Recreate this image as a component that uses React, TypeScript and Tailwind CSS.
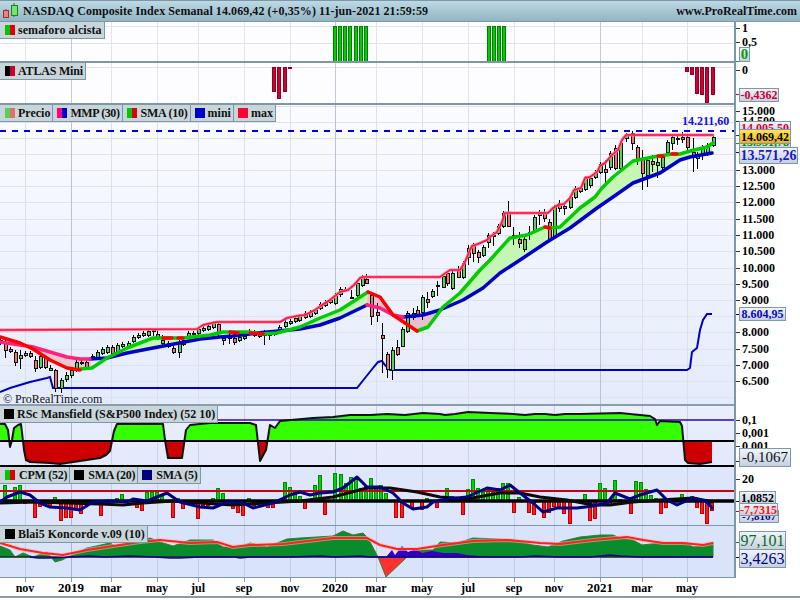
import type { ReactNode } from "react";

const SERIF = "font-['Liberation_Serif',_'Times_New_Roman',_serif]";

// x positions of the time grid
const MONTH_X = [25, 111, 157, 198, 244, 290, 376, 422, 468, 514, 554, 642, 687];
const YEAR_X = [71, 335, 600];

// price levels drawn across the main panel
const PRICE_Y = [106, 122, 138, 154, 170, 186, 202, 219, 235, 251, 268, 284, 300, 316, 332, 349, 365, 381, 397];

const PRICE_LABELS: [string, number][] = [
  ["15.000", 111],
  ["14.500", 121],
  ["13.000", 170],
  ["12.500", 186],
  ["12.000", 202],
  ["11.500", 219],
  ["11.000", 235],
  ["10.500", 251],
  ["10.000", 268],
  ["9.500", 284],
  ["9.000", 300],
  ["8.000", 332],
  ["7.500", 349],
  ["7.000", 365],
  ["6.500", 381],
];

const TIME_LABELS: [string, number, boolean][] = [
  ["nov", 25, false],
  ["2019", 71, true],
  ["mar", 111, false],
  ["may", 157, false],
  ["jul", 198, false],
  ["sep", 244, false],
  ["nov", 290, false],
  ["2020", 335, true],
  ["mar", 376, false],
  ["may", 422, false],
  ["jul", 468, false],
  ["sep", 514, false],
  ["nov", 554, false],
  ["2021", 600, true],
  ["mar", 642, false],
  ["may", 687, false],
];

// x, body top, body bottom, green?, wick top, wick bottom (all page pixels)
type Candle = [number, number, number, number, number?, number?];
const CANDLES: Candle[] = [
  [0, 340, 343, 1], [5, 343, 350, 0, 340, 358], [10, 349, 351, 0], [15, 352, 362, 0, 350, 366], [20, 355, 358, 1, 350, 369],
  [25, 353, 355, 1], [30, 353, 356, 0], [35, 360, 368, 0, 356, 372], [40, 356, 367, 1], [45, 357, 367, 0],
  [50, 368, 370, 1, 365, 371], [55, 370, 388, 0, 369, 392], [61, 380, 388, 1, 378, 393], [66, 375, 379, 1, 372, 382], [71, 370, 375, 1, 367, 378],
  [76, 362, 370, 1], [81, 362, 363, 1], [86, 362, 367, 0], [92, 356, 358, 1], [97, 352, 357, 1],
  [102, 349, 353, 1], [107, 347, 352, 1], [112, 347, 353, 0, 345, 358], [117, 345, 352, 1], [122, 344, 346, 1],
  [128, 343, 347, 1], [133, 337, 341, 1], [138, 335, 337, 1], [143, 333, 335, 1], [148, 331, 335, 1],
  [153, 330, 331, 1, 328, 336], [157, 334, 338, 0, 330, 340], [162, 340, 343, 1, 335, 347], [168, 343, 346, 0], [173, 348, 352, 0],
  [179, 342, 352, 1, 340, 358], [183, 340, 344, 1], [188, 333, 337, 1], [193, 333, 334, 1], [198, 329, 333, 1],
  [203, 328, 330, 1], [208, 326, 329, 1], [213, 323, 327, 1], [218, 324, 333, 0, 321, 336], [223, 338, 340, 1, 335, 345],
  [229, 336, 338, 1, 333, 344], [234, 338, 342, 0, 334, 345], [239, 337, 340, 1], [244, 336, 338, 1], [249, 331, 333, 1],
  [254, 332, 335, 0], [259, 334, 336, 1], [264, 334, 335, 1, 330, 345], [269, 333, 335, 1, 331, 340], [274, 332, 334, 1],
  [279, 327, 330, 1], [285, 322, 326, 1], [290, 321, 323, 1], [295, 318, 321, 1], [299, 316, 320, 1],
  [305, 313, 317, 1], [310, 312, 316, 1], [315, 310, 313, 1], [320, 304, 308, 1], [325, 302, 305, 1],
  [330, 300, 302, 1], [335, 295, 303, 1], [340, 289, 294, 1, 287, 297], [345, 289, 290, 1], [351, 297, 298, 1, 290, 299],
  [357, 283, 295, 1], [362, 277, 285, 1], [366, 279, 283, 0, 274, 284], [371, 295, 316, 0, 293, 325], [377, 312, 315, 0, 303, 322],
  [382, 335, 338, 0, 323, 373], [387, 354, 369, 0, 352, 378], [392, 350, 370, 1, 347, 380], [397, 347, 354, 0, 340, 356], [402, 329, 346, 1, 327, 347],
  [407, 313, 331, 1, 311, 333], [413, 313, 317, 1, 308, 320], [417, 310, 314, 0, 306, 317], [422, 297, 312, 1, 295, 320], [427, 299, 302, 0, 292, 308],
  [432, 291, 296, 1, 289, 298], [437, 285, 286, 1, 281, 296], [443, 276, 287, 1, 274, 288], [447, 273, 283, 0, 270, 286], [452, 273, 288, 1],
  [458, 270, 277, 0, 266, 278], [463, 263, 277, 1], [468, 248, 257, 1, 245, 265], [473, 246, 253, 0, 243, 262], [478, 252, 257, 0, 250, 263],
  [483, 247, 255, 1], [488, 235, 242, 1, 233, 248], [493, 235, 236, 1, 232, 246], [498, 226, 233, 1, 224, 235], [503, 213, 226, 1],
  [508, 213, 226, 0, 201, 227], [513, 235, 238, 1, 227, 245], [519, 239, 243, 0, 232, 248], [524, 239, 249, 1, 236, 252], [529, 232, 234, 1, 226, 240],
  [534, 217, 231, 1, 215, 233], [539, 213, 215, 1, 210, 225], [544, 213, 218, 0, 209, 222], [549, 222, 239, 0, 219, 241], [554, 207, 236, 1],
  [559, 203, 208, 0, 200, 212], [564, 206, 208, 1, 203, 215], [570, 197, 207, 1], [575, 188, 197, 1], [580, 188, 191, 1],
  [585, 178, 189, 1], [590, 178, 185, 1, 176, 188], [595, 172, 177, 1], [600, 164, 172, 1], [605, 169, 172, 0, 160, 187],
  [610, 153, 167, 1, 151, 170], [615, 148, 168, 0, 145, 170], [620, 143, 168, 1], [626, 135, 138, 1, 133, 142], [632, 133, 143, 0, 131, 150],
  [637, 147, 159, 0, 145, 165], [642, 159, 173, 0, 150, 190], [647, 160, 175, 1, 158, 187], [652, 161, 164, 0, 155, 172], [657, 162, 165, 1, 158, 178],
  [662, 157, 167, 1, 155, 172], [667, 142, 152, 1, 140, 155], [672, 137, 143, 1, 135, 150], [677, 138, 139, 1, 136, 145], [682, 137, 139, 0, 132, 143],
  [687, 137, 147, 0, 135, 150], [693, 152, 157, 0, 138, 172], [697, 155, 158, 1, 152, 169], [702, 147, 153, 1, 145, 160], [707, 145, 152, 1, 143, 156],
  [713, 137, 145, 1, 136, 147],
];

const MAX_LINE =
  "0,330 197,329 203,325 217,322 280,322 287,318 297,316 305,315 315,310 322,305 330,300 340,292 348,290 354,285 360,278 363,277 440,277 447,272 450,270 460,270 465,262 470,250 472,246 478,244 487,240 491,236 497,232 502,222 505,213 548,213 553,208 558,205 564,204 570,198 574,190 581,188 585,178 590,177 597,172 600,166 605,163 612,155 618,150 622,140 626,135 713,135";

const MMP_BLUE_A =
  "90,359 107,358 127,353 153,348 200,339 220,337 233,336 257,333 300,329 320,325 340,318 367,305";
const MMP_BLUE_B =
  "403,317 423,315 440,310 463,300 483,288 500,273 520,260 547,242 570,228 597,208 613,197 633,183 660,173 680,160 690,157 712,153";
const MMP_PINK_A = "0,342 33,347 50,352 67,357 80,359 90,359";
const MMP_PINK_B = "367,305 380,308 393,315 403,317";

const SMA_RED_A = "0,337 20,343 33,349 50,360 67,368 80,370";
const SMA_RED_B = "368,292 380,297 393,315 417,331";
const SMA_GREEN_A =
  "80,369 92,368 107,358 127,348 153,338 183,338 210,335 223,332 247,332 263,334 277,333 300,327 320,318 340,310 368,292";
const SMA_GREEN_B =
  "417,331 428,327 443,307 460,293 480,270 490,260 510,238 527,235 545,227 550,228 560,227 580,208 595,197 602,188 613,177 633,161 653,157 672,154 680,154 690,151 707,147 713,143";

const FILL_PINK_A = "15,344 33,349 50,360 67,368 80,370 92,368 90,359 80,359 67,357 50,352 33,347";
const FILL_GREEN_A =
  "107,358 127,348 153,338 183,338 210,335 223,332 247,332 263,334 277,333 300,327 320,318 340,310 368,292 367,305 340,318 320,325 300,329 257,333 233,336 220,337 200,339 153,348 127,353";
const FILL_PINK_B = "368,292 380,297 393,315 417,331 428,327 437,314 423,315 403,317 393,315 380,308 367,305";
const FILL_GREEN_B =
  "437,314 443,307 460,293 480,270 490,260 510,238 527,235 545,227 550,228 560,227 580,208 595,197 602,188 613,177 633,161 653,157 672,154 680,154 690,151 707,147 713,143 712,153 690,157 680,160 660,173 633,183 613,197 597,208 570,228 547,242 520,260 500,273 483,288 463,300 440,310";

const MINI_LINE =
  "0,392 10,388 20,385 30,382 47,378 50,377 53,388 357,388 365,378 373,368 378,362 382,361 385,365 390,370 687,370 690,368 692,352 697,348 700,330 703,320 707,314 712,314";

const RSC_CURVE =
  "0,424 5,424 8,430 10,447 12,440 14,428 18,425 21,424 24,450 26,460 30,462 50,463 60,464 80,461 100,458 106,455 110,451 114,431 117,424 160,424 163,424 165,440 168,458 182,458 186,430 190,425 210,423 250,423 256,425 260,461 266,450 270,425 275,428 280,421 313,418 333,417 350,415 370,415 387,414 405,415 423,413 440,414 445,415 455,414 468,412 490,413 513,414 525,415 535,414 545,414 555,415 565,414 580,414 620,413 650,416 655,419 657,425 660,421 680,422 682,426 685,460 688,463 700,464 712,462";

// CPM histogram: x and the far end of the bar (zero is at y=501)
const CPM_BARS: [number, number][] = [
  [5, 485], [15, 487], [20, 485], [25, 503], [35, 517], [40, 506], [45, 505], [50, 506], [55, 497], [61, 520], [66, 517], [71, 517], [76, 508], [81, 513],
  [101, 515], [117, 498], [122, 494], [127, 500], [137, 507], [142, 510], [147, 492], [152, 492], [157, 492], [162, 496], [173, 517], [178, 498], [183, 508], [193, 504], [198, 518], [203, 505], [208, 505], [213, 498], [218, 488], [223, 493], [233, 508], [238, 512], [243, 515], [249, 498], [254, 505], [268, 507], [273, 507], [285, 482], [290, 487], [295, 492], [300, 496],
  [305, 508], [315, 485], [320, 475], [325, 514], [335, 473], [341, 474], [346, 483], [351, 477], [356, 478], [361, 488], [366, 486], [371, 478], [376, 488], [381, 485], [386, 493], [396, 517], [402, 517], [412, 507], [422, 509], [427, 498], [437, 507], [447, 488], [452, 496], [463, 514], [468, 489], [473, 479], [478, 488], [483, 492], [488, 487], [493, 492], [498, 488], [503, 483], [508, 483], [514, 512], [519, 497], [529, 512], [534, 514], [544, 517], [549, 512], [554, 506], [559, 506], [564, 513], [570, 523],
  [585, 494], [590, 520], [595, 518], [600, 483], [605, 488], [610, 505], [615, 480], [620, 499], [631, 513], [636, 481], [641, 482], [646, 489], [651, 495], [656, 498], [661, 513], [666, 507], [682, 494], [692, 496], [697, 507], [702, 513], [707, 523], [712, 510],
];

const CPM_NAVY =
  "0,502 7,497 20,492 30,495 40,503 50,507 67,508 80,510 93,502 110,501 127,502 133,499 147,501 167,493 180,502 200,507 213,508 227,502 243,503 253,508 273,503 290,495 300,492 310,495 320,493 333,492 343,488 357,477 367,487 380,487 393,493 403,503 413,509 427,507 433,502 447,499 467,497 487,488 500,490 510,485 520,493 533,503 543,512 557,508 577,508 593,506 607,503 615,493 630,499 640,495 657,490 667,500 677,505 693,498 707,502 713,509";
const CPM_BLACK =
  "0,503 33,502 67,503 100,504 123,505 143,503 173,501 200,503 233,505 267,503 300,501 333,497 367,488 390,488 417,492 440,497 467,499 500,493 520,493 540,497 567,500 593,505 610,505 633,502 660,500 693,498 713,502";

const KON_GREEN =
  "0,557 0,546 10,550 15,557 23,553 33,557 47,552 55,562 62,560 72,555 87,548 110,543 115,546 133,543 150,538 160,542 173,546 190,540 213,540 223,547 240,547 250,543 267,547 287,539 300,538 317,537 333,536 343,531 353,535 363,533 368,538 378,557";
const KON_GREEN_B =
  "407,557 415,550 433,550 440,542 457,543 473,538 497,539 513,540 533,545 548,547 563,541 580,537 600,535 613,535 620,538 633,540 642,545 660,543 688,543 693,547 707,545 713,542 713,557";
const KON_BLUE =
  "386,557 392,550 395,555 402,546 408,552 415,549 422,553 432,551 443,553 457,553 467,555 480,556 500,557";
const KON_RED_AREA = "378,557 386,577 407,557";
const KON_RED_LINE =
  "0,543 20,549 43,553 63,555 87,550 113,546 140,542 160,540 190,543 217,542 233,547 250,545 283,544 300,542 333,538 367,538 380,545 397,549 417,549 443,545 473,541 507,540 540,543 560,544 593,540 627,537 643,540 663,543 683,543 703,545 713,543";
const KON_NAVY =
  "30,557 38,558 48,558 70,557 90,556 105,557 130,556 155,557 170,558 180,558 200,557 235,557 240,558 250,557 290,557 320,556 335,557 360,556 370,557 500,557 520,557 535,556 560,557 590,557 610,555 620,556 640,557 660,557 713,557";

function Swatch({ left, right }: { left: string; right?: string }) {
  return (
    <span className="flex w-[10px] h-[10px] shrink-0">
      <span className={`flex-1 ${left}`} />
      <span className={`flex-1 ${right ?? left}`} />
    </span>
  );
}

function Tab({ children, className = "" }: { children: ReactNode; className?: string }) {
  return (
    <div
      className={`flex items-center gap-[3px] h-[17px] pl-[4px] pr-[2px] bg-[#c8d6dc] border-r border-b border-[#7f97a4] text-[12px] font-bold text-[#111] whitespace-nowrap ${className}`}
    >
      {children}
    </div>
  );
}

function TabRow({ children }: { children: ReactNode }) {
  return <div className="absolute left-0 top-0 flex">{children}</div>;
}

// Time grid behind a panel; page-pixel viewBox so the traced numbers read directly
function Grid({ top, height, hLines = [], month, year }: { top: number; height: number; hLines?: number[]; month: string; year: string }) {
  return (
    <g shapeRendering="crispEdges">
      {hLines.map((y) => (
        <line key={y} x1={0} x2={734} y1={y} y2={y} stroke="#dfe3ee" />
      ))}
      {MONTH_X.map((x) => (
        <line key={x} x1={x} x2={x} y1={top} y2={top + height} stroke={month} />
      ))}
      {YEAR_X.map((x) => (
        <line key={x} x1={x} x2={x} y1={top} y2={top + height} stroke={year} />
      ))}
    </g>
  );
}

function AxisLabel({ y, children }: { y: number; children: ReactNode }) {
  return (
    <>
      <span className="absolute left-0 w-[4px] h-px bg-[#333]" style={{ top: y }} />
      <span className="absolute left-[6px] -translate-y-1/2 text-[12px] font-bold leading-none text-black" style={{ top: y }}>
        {children}
      </span>
    </>
  );
}

function Tag({ top, height, width, className, children }: { top: number; height: number; width: number; className: string; children: ReactNode }) {
  return (
    <div
      className={`absolute left-[3px] flex items-center justify-center border border-[#8098a6] leading-none whitespace-nowrap overflow-hidden bg-gradient-to-b from-[#f0f4fc] to-[#c6d0e2] ${className}`}
      style={{ top, height, width }}
    >
      {children}
    </div>
  );
}

function Chart({ top, height, children }: { top: number; height: number; children: ReactNode }) {
  return (
    <svg className="block absolute left-0 top-0" width={734} height={height} viewBox={`0 ${top} 734 ${height}`}>
      {children}
    </svg>
  );
}

export default function App() {
  return (
    <div className={`w-[800px] h-[600px] flex flex-col bg-white overflow-hidden ${SERIF}`}>
      {/* Title bar */}
      <div className="h-[22px] shrink-0 flex items-center justify-between pl-[3px] pr-[3px] bg-gradient-to-b from-[#bcdae6] to-[#93b4c2] border-t border-b border-[#7f97a4]">
        <div className="flex items-center gap-[4px]">
          <svg width="16" height="16" viewBox="0 0 16 16" className="shrink-0">
            <line x1="3" x2="3" y1="6" y2="15" stroke="#b03030" />
            <rect x="0.5" y="7.5" width="5" height="7" fill="#f08080" stroke="#a03030" />
            <line x1="11" x2="11" y1="0" y2="14" stroke="#208020" />
            <rect x="8.5" y="2.5" width="6" height="10" fill="#70e870" stroke="#208020" />
          </svg>
          <span className="text-[12px] font-bold tracking-[0.07px] text-[#111]">
            NASDAQ Composite Index Semanal 14.069,42 (+0,35%) 11-jun-2021 21:59:59
          </span>
        </div>
        <span className="text-[12px] font-bold text-[#111]">www.ProRealTime.com</span>
      </div>

      {/* semaforo alcista */}
      <div className="h-[41px] shrink-0 flex">
        <div className="relative w-[734px] h-full bg-[#fdfdff] border-b-2 border-[#7f97a4]">
          <Chart top={22} height={39}>
            <Grid top={22} height={39} hLines={[26, 43]} month="#e2e4ee" year="#c6c9d8" />
            <g shapeRendering="crispEdges">
              {[333, 338, 343, 348, 354, 359, 364, 487, 492, 497, 502].map((x) => (
                <rect key={x} x={x} y={26} width={3} height={35.5} fill="#00cc00" stroke="#008000" />
              ))}
            </g>
          </Chart>
          <TabRow>
            <Tab className="pl-[5px] tracking-[0.05px]">
              <Swatch left="bg-[#00c800]" right="bg-[#e00000]" />
              semaforo alcista
            </Tab>
          </TabRow>
        </div>
        <div className="relative flex-1 border-l-2 border-[#7f97a4]">
          <AxisLabel y={6}>1</AxisLabel>
          <AxisLabel y={20}>0,5</AxisLabel>
          <span className="absolute left-0 top-[39px] w-[4px] h-px bg-[#00aa00]" />
          <Tag top={25} height={15} width={11} className="text-[15px] font-bold text-[#0a9a0a]">0</Tag>
        </div>
      </div>

      {/* ATLAS Mini */}
      <div className="h-[42px] shrink-0 flex">
        <div className="relative w-[734px] h-full bg-[#fdfdff] border-b-2 border-[#7f97a4]">
          <Chart top={63} height={40}>
            <Grid top={63} height={40} hLines={[67]} month="#e2e4ee" year="#c6c9d8" />
            <g shapeRendering="crispEdges">
              {[
                [272, 91], [277, 98], [283, 91], [288, 68], [685, 71], [690, 74], [695, 93], [700, 94], [705, 102], [711, 94],
              ].map(([x, y]) => (
                <rect key={x} x={x} y={67} width={3} height={y - 67} fill="#d00030" stroke="#900020" />
              ))}
            </g>
          </Chart>
          <TabRow>
            <Tab className="pl-[5px] tracking-[-0.2px]">
              <Swatch left="bg-black" right="bg-[#c80030]" />
              ATLAS Mini
            </Tab>
          </TabRow>
        </div>
        <div className="relative flex-1 border-l-2 border-[#7f97a4]">
          <AxisLabel y={7}>0</AxisLabel>
          <span className="absolute left-0 top-[31px] w-[4px] h-px bg-[#c80030]" />
          <Tag top={25} height={14} width={40} className="text-[12px] font-bold text-[#c80030]">-0,4362</Tag>
        </div>
      </div>

      {/* Price panel */}
      <div className="h-[301px] shrink-0 flex">
        <div className="relative w-[734px] h-full bg-gradient-to-b from-[#fbfcff] to-[#e4ebfb] border-b-2 border-[#8a9cb0]">
          <Chart top={105} height={299}>
            <Grid top={105} height={299} hLines={PRICE_Y} month="#dcdfec" year="#bcc2d4" />
            <polygon points={FILL_PINK_A} fill="#ecc6d0" />
            <polygon points={FILL_GREEN_A} fill="#c6f6b4" />
            <polygon points={FILL_PINK_B} fill="#e6c0cc" />
            <polygon points={FILL_GREEN_B} fill="#c6f6b4" />
            <polyline points={MINI_LINE} fill="none" stroke="#0000c8" strokeWidth={2} />
            <g shapeRendering="crispEdges">
              {CANDLES.map(([x, t, b, up, wt, wb]) => (
                <g key={x}>
                  <line x1={x + 0.5} x2={x + 0.5} y1={wt ?? t - 2} y2={wb ?? b + 2} stroke="#000" />
                  <rect x={x - 1} y={t + 0.5} width={3} height={b - t} fill={up ? "#5ad25a" : "#e47a70"} stroke="#111" />
                </g>
              ))}
            </g>
            <g fill="none" strokeLinejoin="round" strokeLinecap="round">
              <polyline points={MMP_BLUE_A} stroke="#0000c8" strokeWidth={3.5} />
              <polyline points={MMP_BLUE_B} stroke="#0000c8" strokeWidth={3.5} />
              <polyline points={MMP_PINK_A} stroke="#ff2080" strokeWidth={3.5} />
              <polyline points={MMP_PINK_B} stroke="#ff2080" strokeWidth={3.5} />
              <polyline points={SMA_GREEN_A} stroke="#00cc00" strokeWidth={3.5} />
              <polyline points={SMA_GREEN_B} stroke="#00cc00" strokeWidth={3.5} />
              <polyline points={SMA_RED_A} stroke="#ff0000" strokeWidth={3.5} />
              <polyline points={SMA_RED_B} stroke="#ff0000" strokeWidth={3.5} />
              <polyline points="163,338 172,338" stroke="#ff0000" strokeWidth={3.5} />
              <polyline points="178,338 183,338" stroke="#ff0000" strokeWidth={3.5} />
              <polyline points="230,332 238,333" stroke="#ff0000" strokeWidth={3.5} />
              <polyline points="250,333 263,334" stroke="#ff0000" strokeWidth={3.5} />
              <polyline points="545,227 550,228" stroke="#ff0000" strokeWidth={3.5} />
              <polyline points="658,156 663,156" stroke="#ff0000" strokeWidth={3.5} />
              <polyline points="672,154 677,154" stroke="#ff0000" strokeWidth={3.5} />
              <polyline points={MAX_LINE} stroke="#ff8098" strokeWidth={3} />
              <polyline points={MAX_LINE} stroke="#ff1040" strokeWidth={1.5} />
            </g>
            <line x1={0} x2={734} y1={131} y2={131} stroke="#0000e0" strokeWidth={2} strokeDasharray="6 6" />
          </Chart>
          <span className="absolute left-[682px] top-[10px] text-[12px] font-bold leading-none text-[#1010e0]">14.211,60</span>
          <span className="absolute left-[3px] top-[288px] text-[12px] leading-none text-[#111]">© ProRealTime.com</span>
          <TabRow>
            <Tab className="pl-[5px]">
              <Swatch left="bg-[#58d058]" right="bg-[#e07068]" />
              Precio
            </Tab>
            <Tab className="tracking-[-0.4px]">
              <Swatch left="bg-[#ff0080]" right="bg-[#0000d0]" />
              MMP (30)
            </Tab>
            <Tab className="gap-[4px] tracking-[-0.25px]">
              <Swatch left="bg-[#00c800]" right="bg-[#e00000]" />
              SMA (10)
            </Tab>
            <Tab>
              <Swatch left="bg-[#0000c8]" />
              mini
            </Tab>
            <Tab>
              <Swatch left="bg-[#ff0033]" />
              max
            </Tab>
          </TabRow>
        </div>
        <div className="relative flex-1 border-l-2 border-[#7f97a4]">
          {PRICE_LABELS.map(([text, y]) => (
            <AxisLabel key={text} y={y - 105}>
              {text}
            </AxisLabel>
          ))}
          <span className="absolute left-0 top-[30px] w-[4px] h-px bg-[#333]" />
          <span className="absolute left-0 top-[38px] w-[4px] h-px bg-[#00aa00]" />
          <span className="absolute left-0 top-[47px] w-[4px] h-px bg-[#0000e0]" />
          <Tag top={16} height={13} width={52} className="text-[12px] font-bold text-[#e00030] !items-start">14.005,50</Tag>
          <Tag top={34} height={10} width={52} className="text-[12px] font-bold text-[#008800] !items-end">13.951,78</Tag>
          <Tag top={24} height={15} width={52} className="text-[12px] font-bold text-black !from-[#ffe45c] !to-[#eeb400]">14.069,42</Tag>
          <Tag top={42} height={17} width={59} className="text-[14px] font-bold text-[#1818c8]">13.571,26</Tag>
          <span className="absolute left-0 top-[209px] w-[4px] h-px bg-[#0000e0]" />
          <Tag top={202} height={14} width={47} className="text-[12px] font-bold text-[#0808c0]">8.604,95</Tag>
        </div>
      </div>

      {/* RSc Mansfield */}
      <div className="h-[61px] shrink-0 flex">
        <div className="relative w-[734px] h-full bg-gradient-to-b from-[#eaeffd] to-[#e2e9fb]">
          <Chart top={406} height={61}>
            <defs>
              <clipPath id="rsc-up">
                <rect x={0} y={406} width={734} height={35} />
              </clipPath>
              <clipPath id="rsc-down">
                <rect x={0} y={441} width={734} height={26} />
              </clipPath>
            </defs>
            <Grid top={406} height={61} month="#c8d2e8" year="#aab8d4" />
            <polygon points={`0,441 ${RSC_CURVE} 712,441`} fill="#33ff00" clipPath="url(#rsc-up)" />
            <polygon points={`0,441 ${RSC_CURVE} 712,441`} fill="#cc0000" clipPath="url(#rsc-down)" />
            <line x1={0} x2={734} y1={420} y2={420} stroke="#3000c0" strokeWidth={1.5} />
            <polyline points={RSC_CURVE} fill="none" stroke="#111" strokeWidth={2} strokeLinejoin="round" />
            <line x1={0} x2={734} y1={441} y2={441} stroke="#000" strokeWidth={2} />
            <line x1={0} x2={734} y1={466} y2={466} stroke="#000" strokeWidth={2} />
          </Chart>
          <TabRow>
            <Tab>
              <Swatch left="bg-black" />
              RSc Mansfield (S&amp;P500 Index) (52 10)
            </Tab>
          </TabRow>
        </div>
        <div className="relative flex-1 border-l-2 border-[#7f97a4]">
          <AxisLabel y={14}>0,1</AxisLabel>
          <AxisLabel y={27}>0,001</AxisLabel>
          <AxisLabel y={40}>0,001</AxisLabel>
          <span className="absolute left-0 top-[55px] w-[4px] h-px bg-[#222]" />
          <Tag top={42} height={19} width={52} className="text-[15px] text-[#111]">-0,1067</Tag>
        </div>
      </div>

      {/* CPM */}
      <div className="h-[59px] shrink-0 flex">
        <div className="relative w-[734px] h-full bg-[#dde6fb] border-b border-[#7f97a4]">
          <Chart top={467} height={58}>
            <Grid top={467} height={58} month="#c4cfe8" year="#a9b6d4" />
            <g shapeRendering="crispEdges">
              {CPM_BARS.map(([x, y]) => {
                const up = y < 501;
                return (
                  <rect
                    key={x}
                    x={x - 1.5}
                    y={up ? y : 501}
                    width={3}
                    height={Math.abs(501 - y)}
                    fill={up ? "#00d400" : "#ff1a1a"}
                    stroke={up ? "#008c00" : "#c00000"}
                  />
                );
              })}
            </g>
            <line x1={0} x2={734} y1={491} y2={491} stroke="#c80010" strokeWidth={2} />
            <line x1={0} x2={734} y1={501} y2={501} stroke="#000" strokeWidth={3.5} />
            <polyline points={CPM_BLACK} fill="none" stroke="#0a0a0a" strokeWidth={3} strokeLinejoin="round" />
            <polyline points={CPM_NAVY} fill="none" stroke="#000080" strokeWidth={3} strokeLinejoin="round" />
          </Chart>
          <TabRow>
            <Tab className="gap-[4px] pl-[5px] tracking-[-0.25px]">
              <Swatch left="bg-[#00c800]" right="bg-[#e00000]" />
              CPM (52)
            </Tab>
            <Tab className="gap-[4px] tracking-[-0.25px]">
              <Swatch left="bg-black" />
              SMA (20)
            </Tab>
            <Tab className="gap-[4px] tracking-[-0.25px]">
              <Swatch left="bg-[#000080]" />
              SMA (5)
            </Tab>
          </TabRow>
        </div>
        <div className="relative flex-1 border-l-2 border-[#7f97a4]">
          <AxisLabel y={12}>20</AxisLabel>
          <span className="absolute left-0 top-[34px] w-[4px] h-px bg-[#222]" />
          <span className="absolute left-0 top-[44px] w-[4px] h-px bg-[#e00000]" />
          <Tag top={43} height={13} width={40} className="text-[11px] font-bold text-[#000080] !items-end">-7,8167</Tag>
          <Tag top={24} height={13} width={37} className="text-[12px] font-bold text-black">1,0852</Tag>
          <Tag top={36} height={13} width={39} className="text-[12px] font-bold text-[#ff1010]">-7,7315</Tag>
        </div>
      </div>

      {/* Koncorde */}
      <div className="h-[52px] shrink-0 flex">
        <div className="relative w-[734px] h-full bg-[#d9e3fa] border-b border-[#7f97a4]">
          <Chart top={526} height={51}>
            <Grid top={526} height={51} month="#c2cde6" year="#a7b5d4" />
            <polygon points={KON_GREEN} fill="#0a8c2c" stroke="#3a7a3a" />
            <polygon points={KON_GREEN_B} fill="#0a8c2c" stroke="#3a7a3a" />
            <polygon points={KON_RED_AREA} fill="#ff3030" stroke="#3a7a3a" />
            <polygon points={KON_BLUE} fill="#3000c0" />
            <line x1={0} x2={713} y1={557} y2={557} stroke="#000" />
            <polyline points={KON_NAVY} fill="none" stroke="#1a0090" strokeWidth={1.5} />
            <polyline points={KON_RED_LINE} fill="none" stroke="#ffb0a8" strokeWidth={4} strokeOpacity={0.6} />
            <polyline points={KON_RED_LINE} fill="none" stroke="#ff2020" strokeWidth={2} />
          </Chart>
          <TabRow>
            <Tab className="pl-[5px]">
              <Swatch left="bg-black" />
              Blai5 Koncorde v.09 (10)
            </Tab>
          </TabRow>
        </div>
        <div className="relative flex-1 border-l-2 border-[#7f97a4]">
          <span className="absolute left-0 top-[16px] w-[4px] h-px bg-[#0a8c2c]" />
          <span className="absolute left-0 top-[31px] w-[4px] h-px bg-[#000080]" />
          <Tag top={5} height={19} width={47} className="text-[16px] text-[#0a6a1a]">97,101</Tag>
          <Tag top={23} height={19} width={47} className="text-[16px] text-[#000080]">3,4263</Tag>
        </div>
      </div>

      {/* Time axis */}
      <div className="relative h-[20px] shrink-0 bg-white border-b-2 border-[#8c9aa4]">
        {TIME_LABELS.map(([text, x, big]) => (
          <span key={`${text}${x}`}>
            <span className="absolute top-0 w-px h-[4px] bg-[#8c98b0]" style={{ left: x }} />
            <span
              className={`absolute top-[3px] -translate-x-1/2 font-bold leading-[14px] text-black ${big ? "text-[13px]" : "text-[12px]"}`}
              style={{ left: x }}
            >
              {text}
            </span>
          </span>
        ))}
      </div>
    </div>
  );
}
